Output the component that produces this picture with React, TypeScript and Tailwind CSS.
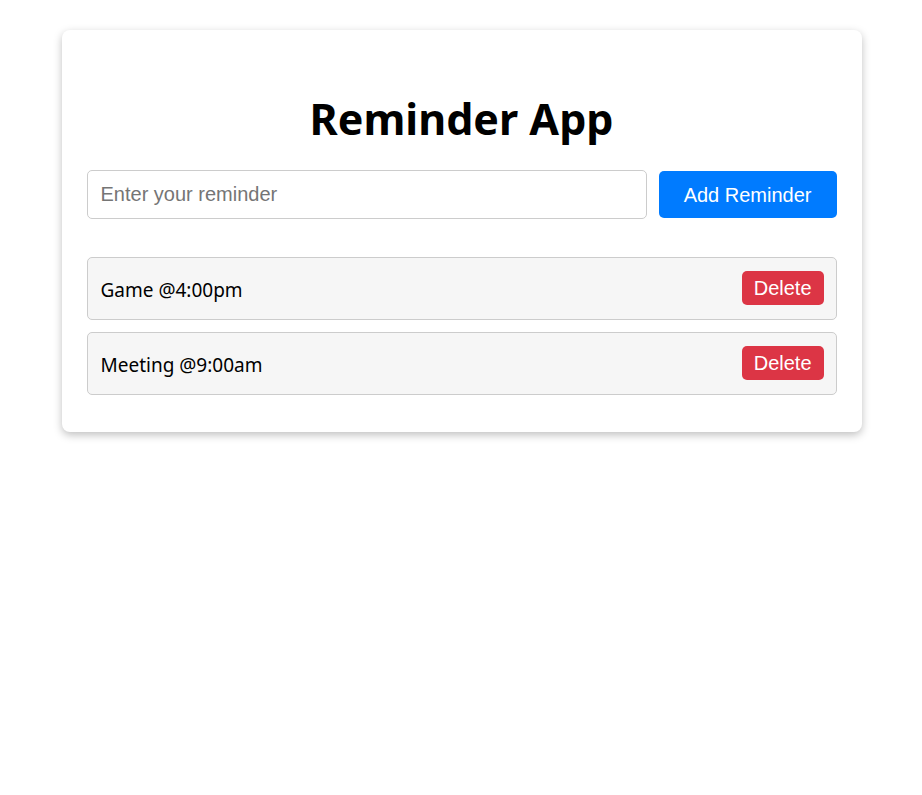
import { useState } from 'react';

interface Reminder {
  id: number;
  text: string;
}

export default function App() {
  const [input, setInput] = useState('');
  const [reminders, setReminders] = useState<Reminder[]>([
    { id: 1, text: 'Game @4:00pm' },
    { id: 2, text: 'Meeting @9:00am' },
  ]);

  const addReminder = () => {
    if (!input.trim()) return;
    setReminders([...reminders, { id: Date.now(), text: input.trim() }]);
    setInput('');
  };

  const deleteReminder = (id: number) => {
    setReminders(reminders.filter((r) => r.id !== id));
  };

  return (
    <div className="min-h-screen bg-white pt-[30px] pl-px font-['Noto_Sans',sans-serif]">
      <div className="mx-auto w-[800px] rounded-lg bg-white px-[25px] pt-[62px] pb-[37px] shadow-[0_3px_8px_rgba(0,0,0,0.25)]">
        <h1 className="text-center text-[43px] leading-[54px] font-bold text-black">Reminder App</h1>

        <div className="mt-[24px] flex gap-3">
          <input
            type="text"
            value={input}
            onChange={(e) => setInput(e.target.value)}
            placeholder="Enter your reminder"
            className="h-[49px] flex-1 rounded-[5px] border border-[#ccc] px-[13px] font-['Liberation_Sans',Arial,sans-serif] text-[20px] text-black outline-none placeholder:text-[#757575]"
          />
          <button
            onClick={addReminder}
            className="mt-px h-[47px] rounded-[5px] bg-[#007bff] px-[25px] font-['Liberation_Sans',Arial,sans-serif] text-[20px] text-white"
          >
            Add Reminder
          </button>
        </div>

        <ul className="mt-[38px] flex flex-col gap-3">
          {reminders.map((r) => (
            <li
              key={r.id}
              className="flex h-[63px] items-center justify-between rounded-[5px] border border-[#ccc] bg-[#f6f6f6] pr-3 pl-[13px]"
            >
              <span className="mt-[4px] text-[19px] text-black">{r.text}</span>
              <button
                onClick={() => deleteReminder(r.id)}
                className="-mt-[2px] h-[34px] rounded-[5px] bg-[#dc3545] px-3 font-['Liberation_Sans',Arial,sans-serif] text-[20px] text-white"
              >
                Delete
              </button>
            </li>
          ))}
        </ul>
      </div>
    </div>
  );
}
